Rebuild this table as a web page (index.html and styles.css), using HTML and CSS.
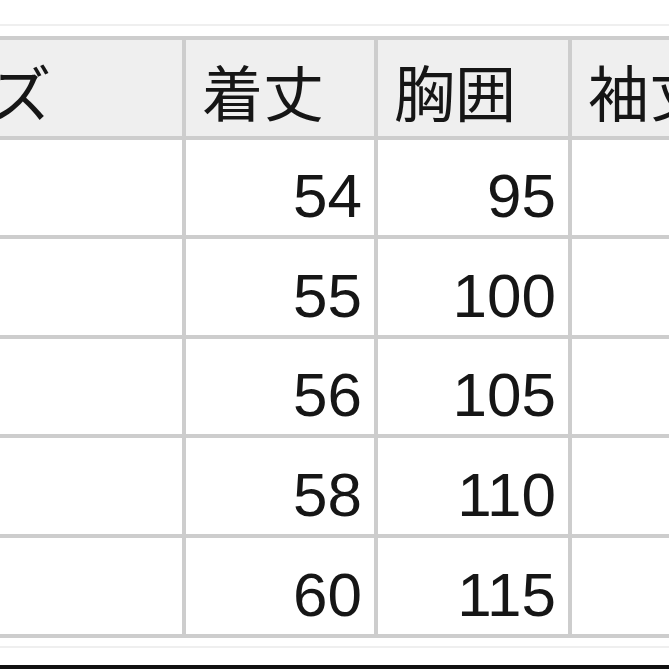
FILE: index.html
```html
<!DOCTYPE html>
<html lang="ja">
<head>
<meta charset="utf-8">
<title>サイズ表</title>
<link rel="stylesheet" href="styles.css">
</head>
<body>
<div class="page">
  <div class="rule rule-top"></div>
  <table class="sheet">
    <colgroup>
      <col class="c-size">
      <col class="c-len">
      <col class="c-chest">
      <col class="c-sleeve">
    </colgroup>
    <thead>
      <tr>
        <th class="head">サイズ</th>
        <th class="head">着丈</th>
        <th class="head">胸囲</th>
        <th class="head">袖丈</th>
      </tr>
    </thead>
    <tbody>
      <tr><td class="label">S</td><td class="num">54</td><td class="num">95</td><td class="num"></td></tr>
      <tr><td class="label">M</td><td class="num">55</td><td class="num">100</td><td class="num"></td></tr>
      <tr><td class="label">L</td><td class="num">56</td><td class="num">105</td><td class="num"></td></tr>
      <tr><td class="label">XL</td><td class="num">58</td><td class="num">110</td><td class="num"></td></tr>
      <tr><td class="label">XXL</td><td class="num">60</td><td class="num">115</td><td class="num"></td></tr>
    </tbody>
  </table>
  <div class="rule rule-bottom"></div>
  <div class="edge"></div>
</div>
</body>
</html>
```

FILE: styles.css
```css
html, body {
  margin: 0;
  padding: 0;
  background: #ffffff;
}

.page {
  width: 669px;
  height: 669px;
  overflow: hidden;
  display: flex;
  flex-direction: column;
  background: #ffffff;
}

.rule {
  flex: none;
  height: 2px;
  background: #efefef;
}

.rule-top {
  margin-top: 24px;
  margin-bottom: 10px;
}

.rule-bottom {
  margin-top: 8px;
}

.edge {
  flex: none;
  height: 4px;
  margin-top: auto;
  background: #111111;
}

.sheet {
  flex: none;
  margin-left: -150px;
  width: 1022px;
  table-layout: fixed;
  border-collapse: separate;
  border-spacing: 0;
  border-top: 4px solid #cdcdcd;
  border-left: 4px solid #cdcdcd;
}

.c-size { width: 332px; }
.c-len { width: 192px; }
.c-chest { width: 194px; }
.c-sleeve { width: 300px; }

.sheet th,
.sheet td {
  box-sizing: border-box;
  height: 99.6px;
  border-right: 4px solid #cdcdcd;
  border-bottom: 4px solid #cdcdcd;
  color: #161616;
  white-space: nowrap;
  overflow: hidden;
}

.head {
  background: #efefef;
  font-family: "Noto Sans CJK JP", "Noto Sans", sans-serif;
  font-weight: 400;
  font-size: 61px;
  line-height: 61px;
  text-align: left;
  vertical-align: middle;
  padding: 6px 10px 0 16px;
}

.num,
.label {
  background: #ffffff;
  font-family: "Liberation Sans", Arial, sans-serif;
  font-size: 62px;
  line-height: 62px;
  vertical-align: bottom;
  padding: 0 12px 8px 16px;
}

.num {
  text-align: right;
}

.label {
  text-align: left;
}
```
